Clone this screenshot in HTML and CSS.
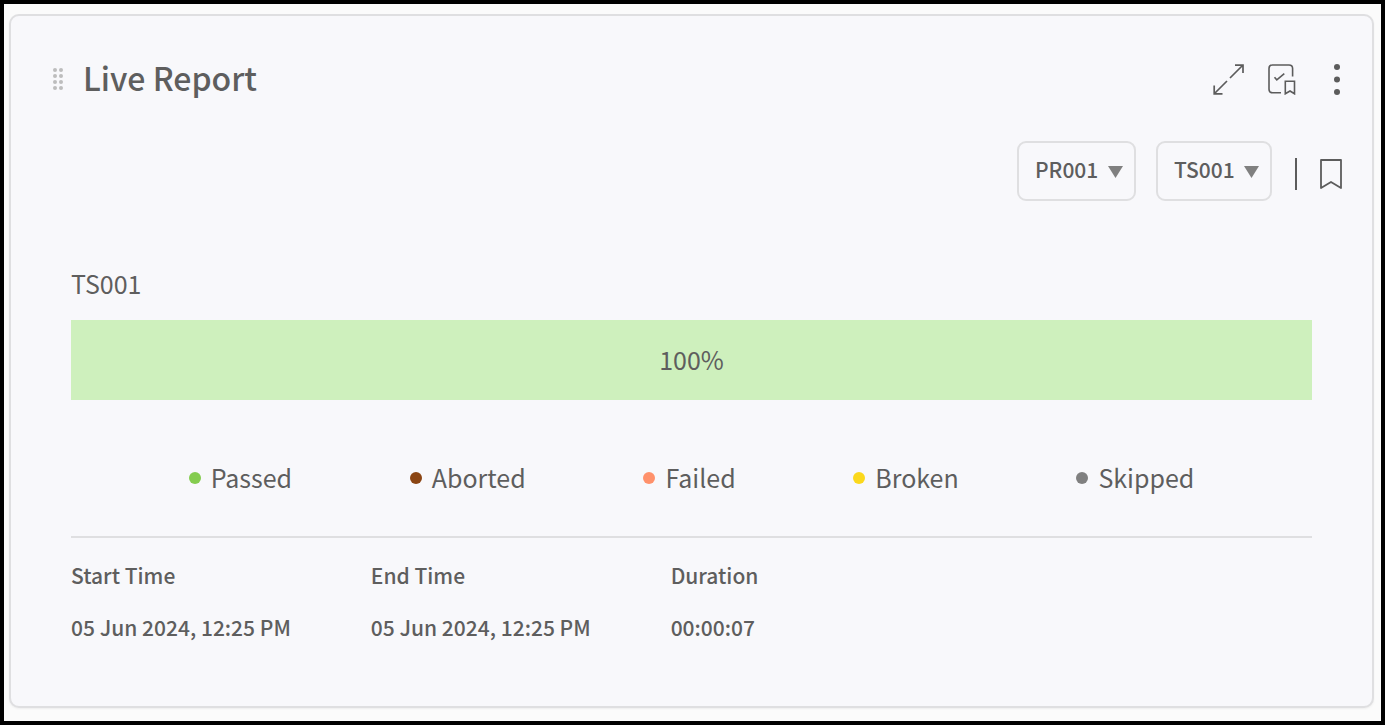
FILE: index.html
```html
<!DOCTYPE html>
<html lang="en">
<head>
    <meta charset="utf-8">
    <title>Live Report</title>
    <link rel="stylesheet" href="styles.css">
</head>
<body>
    <section class="card">
        <header class="card-header">
            <svg class="grip" width="10" height="24" viewBox="0 0 10 24" fill="#bdbdbd">
                <circle cx="2" cy="3" r="2"/><circle cx="8" cy="3" r="2"/>
                <circle cx="2" cy="9" r="2"/><circle cx="8" cy="9" r="2"/>
                <circle cx="2" cy="15" r="2"/><circle cx="8" cy="15" r="2"/>
                <circle cx="2" cy="21" r="2"/><circle cx="8" cy="21" r="2"/>
            </svg>
            <h2>Live Report</h2>
            <div class="actions">
                <button type="button" aria-label="Expand">
                    <svg width="32" height="32" viewBox="0 0 32 32" fill="none" stroke="#5c5c5c" stroke-width="1.7">
                        <path d="M17 15L29.5 2.5M22 2.2H30V10M14 18L1.5 30.5M1.2 22.5V30.8H9.5"/>
                    </svg>
                </button>
                <button type="button" aria-label="Saved reports">
                    <svg width="28" height="32" viewBox="0 0 28 32" fill="none" stroke="#5c5c5c" stroke-width="1.6">
                        <path d="M13 29.8H4.5Q1 29.8 1 26.3V5.5Q1 2 4.5 2H21Q24.6 2 24.6 5.5V13.5"/>
                        <path d="M6.5 14.2L8.8 16.8L16.3 10.6"/>
                        <path d="M17.3 18.3H26.5V30.8L22 28L17.3 30.8Z"/>
                    </svg>
                </button>
                <button type="button" aria-label="More">
                    <svg width="6" height="32" viewBox="0 0 6 32" fill="#5c5c5c">
                        <circle cx="3" cy="4" r="3"/><circle cx="3" cy="16.5" r="3"/><circle cx="3" cy="29" r="3"/>
                    </svg>
                </button>
            </div>
        </header>

        <div class="filters">
            <select class="project" aria-label="Project"><option>PR001</option></select>
            <select class="suite" aria-label="Test suite"><option>TS001</option></select>
            <span class="divider"></span>
            <button type="button" aria-label="Bookmark">
                <svg width="24" height="32" viewBox="0 0 24 32" fill="none" stroke="#5c5c5c" stroke-width="1.8" stroke-linejoin="round">
                    <path d="M2 2H22V30L12 24L2 30Z"/>
                </svg>
            </button>
        </div>

        <div class="report">
            <div class="suite-name">TS001</div>
            <div class="bar"><div class="bar-passed" style="width: 100%">100%</div></div>
            <ul class="legend">
                <li class="passed">Passed</li>
                <li class="aborted">Aborted</li>
                <li class="failed">Failed</li>
                <li class="broken">Broken</li>
                <li class="skipped">Skipped</li>
            </ul>
            <dl class="times">
                <div><dt>Start Time</dt><dd>05 Jun 2024, 12:25 PM</dd></div>
                <div><dt>End Time</dt><dd>05 Jun 2024, 12:25 PM</dd></div>
                <div><dt>Duration</dt><dd>00:00:07</dd></div>
            </dl>
        </div>
    </section>
</body>
</html>
```
FILE: styles.css
```css
* { box-sizing: border-box; }
body {
    margin: 0;
    min-height: 100vh;
    display: flex;
    padding: 10px 7px 13px 5px;
    border: 4px solid #000;
    background: #fbfbfb;
    color: #5e5e5e;
    font-family: "Noto Sans CJK SC", "Noto Sans", sans-serif;
    font-size: 21px;
}
button { padding: 0; border: 0; background: none; cursor: pointer; }
svg { display: block; }

.card {
    flex: 1;
    border: 2px solid #dfdfe1;
    border-radius: 10px;
    background: #f8f8fb;
    box-shadow: 0 1px 2px #eeeeee;
}

.card-header { display: flex; align-items: center; padding: 39px 32px 0 42px; }
h2 { margin: 0 0 0 20px; padding-bottom: 4px; font-size: 32px; font-weight: 500; line-height: 44px; }
.actions { display: flex; align-items: center; margin-left: auto; }
.actions button + button { margin-left: 23px; }
.actions button:last-child { margin-left: 38px; }

.filters { display: flex; align-items: center; justify-content: flex-end; padding: 38px 29px 0; }
select {
    appearance: none;
    height: 60px;
    padding: 0 35px 4px 16px;
    border: 2px solid #dfdfe1;
    border-radius: 9px;
    background: url("data:image/svg+xml,%3Csvg xmlns='http://www.w3.org/2000/svg' width='16' height='13'%3E%3Cpath d='M0 1H15L7.5 13Z' fill='%23808080'/%3E%3C/svg%3E") no-repeat right 10px center;
    color: inherit;
    font-family: inherit;
    font-size: 21px;
    font-weight: 500;
}
.suite { margin-left: 20px; }
.divider { width: 2px; height: 32px; margin: 6px 22px 0 23px; background: #5c5c5c; }
.filters button { margin-top: 6px; }

.report { padding: 64px 60px 0; }
.suite-name { font-size: 25px; line-height: 36px; }
.bar { margin-top: 19px; }
.bar-passed { background: #cef0bd; font-size: 25px; line-height: 78px; padding-bottom: 2px; text-align: center; }

.legend {
    display: flex;
    justify-content: space-evenly;
    margin: 0;
    padding: 59px 0 40px;
    border-bottom: 2px solid #dfdfe1;
    list-style: none;
    font-size: 25px;
    line-height: 37px;
}
.legend li { display: flex; align-items: center; }
.legend li::before { content: ""; width: 12px; height: 12px; margin-right: 10px; border-radius: 50%; background: currentColor; }
.legend .passed::before { background: #84cc4f; }
.legend .aborted::before { background: #8b4513; }
.legend .failed::before { background: #ff916b; }
.legend .broken::before { background: #fbd81c; }
.legend .skipped::before { background: #808080; }

.times { display: flex; gap: 80px; margin: 21px 0 0; font-weight: 500; line-height: 32px; }
dd { margin: 20px 0 0; }
```
